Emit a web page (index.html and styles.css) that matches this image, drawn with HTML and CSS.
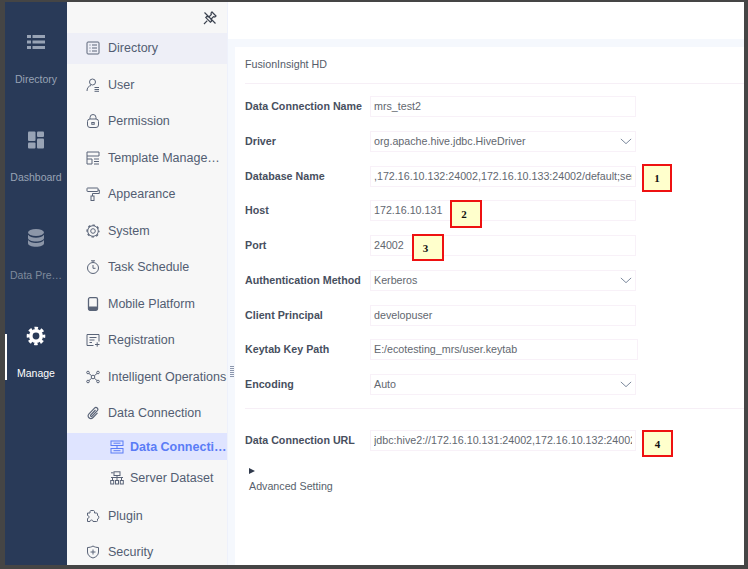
FILE: index.html
```html
<!DOCTYPE html>
<html lang="en">
<head>
<meta charset="utf-8">
<title>Data Connection</title>
<link rel="stylesheet" href="styles.css">
</head>
<body>
<div class="frame">
  <nav class="rail">
    <a class="rail-item">
      <svg class="rail-icon" viewBox="0 0 20 20"><g fill="currentColor"><rect x="1" y="3" width="4" height="3"/><rect x="6.5" y="3" width="12.5" height="3"/><rect x="1" y="8.5" width="4" height="3"/><rect x="6.5" y="8.5" width="12.5" height="3"/><rect x="1" y="14" width="4" height="3"/><rect x="6.5" y="14" width="12.5" height="3"/></g></svg>
      <span>Directory</span>
    </a>
    <a class="rail-item">
      <svg class="rail-icon" viewBox="0 0 20 20"><g fill="currentColor"><rect x="2" y="1.5" width="7.5" height="9.5" rx="1"/><rect x="11" y="1.5" width="7" height="5.5" rx="1"/><rect x="2" y="12.5" width="7.5" height="6" rx="1"/><rect x="11" y="8.5" width="7" height="10" rx="1"/></g></svg>
      <span>Dashboard</span>
    </a>
    <a class="rail-item">
      <svg class="rail-icon" viewBox="0 0 20 20"><g fill="currentColor"><ellipse cx="10" cy="4.5" rx="8" ry="3.5"/><path d="M2 6.8c1.3 2 4.5 3 8 3s6.700-1 8-3V10c0 2-3.600 3.500-8 3.500S2 12 2 10z"/><path d="M2 12c1.300 2 4.500 3 8 3s6.700-1 8-3v3.200c0 2-3.600 3.600-8 3.600S2 17.200 2 15.200z"/></g></svg>
      <span class="dim">Data Pre…</span>
    </a>
    <a class="rail-item active">
      <svg class="rail-icon" viewBox="0 0 20 20"><g fill="none" stroke="currentColor"><circle cx="10" cy="10" r="5.200" stroke-width="3.600"/><circle cx="10" cy="10" r="7.800" stroke-width="3" stroke-dasharray="3.400 2.727" stroke-dashoffset="1.700"/></g></svg>
      <span>Manage</span>
    </a>
  </nav>

  <aside class="menu">
    <div class="pin">
      <svg class="pin-icon" viewBox="0 0 14 14"><g fill="none" stroke="currentColor" stroke-width="1.200"><path d="M9 1 13 5l-1.200 1-1.300-.3-2.300 2.300.3 2.200-1.100 1L2.800 6.600l1-1.100 2.200.3 2.300-2.300L8 2.200z"/><path d="M1 13l3.300-3.300M1.500 1.500l11 11"/></g></svg>
    </div>
    <a class="menu-item current">
      <svg class="menu-icon" viewBox="0 0 14 14"><g fill="none" stroke="currentColor"><rect x="1" y="1" width="12" height="12" rx="1"/><path d="M3.500 4h1M6 4h5M3.500 7h1M6 7h5M3.500 10h1M6 10h5"/></g></svg>
      <span>Directory</span>
    </a>
    <a class="menu-item">
      <svg class="menu-icon" viewBox="0 0 14 14"><g fill="none" stroke="currentColor"><circle cx="6.500" cy="4" r="3"/><path d="M1 13c0-3 1.500-5 4-5.500M8.500 9.500H13M8.500 11.500H13M8.500 13.300H13"/></g></svg>
      <span>User</span>
    </a>
    <a class="menu-item">
      <svg class="menu-icon" viewBox="0 0 14 14"><g fill="none" stroke="currentColor"><rect x="1.500" y="5" width="11" height="8.500" rx="2.500"/><path d="M4 5V3.500a3 3 0 0 1 6 0V5"/><rect x="5.800" y="8.500" width="2.400" height="1.800"/></g></svg>
      <span>Permission</span>
    </a>
    <a class="menu-item">
      <svg class="menu-icon" viewBox="0 0 14 14"><g fill="none" stroke="currentColor"><path d="M1 1h12v4H1zM1 5v8h5V8H1M8 8h5M8 10.500h5M8 13h5"/></g></svg>
      <span>Template Manage…</span>
    </a>
    <a class="menu-item">
      <svg class="menu-icon" viewBox="0 0 14 14"><g fill="none" stroke="currentColor"><rect x="1" y="1" width="11" height="3.500" rx=".5"/><path d="M12 3h1.300v3.500H6.500v2.500"/><rect x="5" y="9" width="3" height="4.500"/></g></svg>
      <span>Appearance</span>
    </a>
    <a class="menu-item">
      <svg class="menu-icon" viewBox="0 0 14 14"><g fill="none" stroke="currentColor"><circle cx="7" cy="7" r="5.300"/><circle cx="7" cy="7" r="6" stroke-width="1.200" stroke-dasharray="2.500 2.212" stroke-dashoffset="1.250"/><circle cx="7" cy="7" r="2.300"/></g></svg>
      <span>System</span>
    </a>
    <a class="menu-item">
      <svg class="menu-icon" viewBox="0 0 14 14"><g fill="none" stroke="currentColor"><circle cx="7" cy="8" r="5.500"/><path d="M5 .8h4M7 .8v1.700M7 5v3.300h2.500"/></g></svg>
      <span>Task Schedule</span>
    </a>
    <a class="menu-item">
      <svg class="menu-icon" viewBox="0 0 14 14"><rect x="2.500" y=".7" width="9" height="12.600" rx="1.500" fill="none" stroke="currentColor" stroke-width="1.300"/><rect x="2.500" y="9.500" width="9" height="3.800" rx="1" fill="currentColor"/></svg>
      <span>Mobile Platform</span>
    </a>
    <a class="menu-item">
      <svg class="menu-icon" viewBox="0 0 14 14"><g fill="none" stroke="currentColor"><path d="M7.500 12.500H1v-11h12v7"/><path d="M3.500 4.500h7M3.500 7h5M3.500 9.500h2.500M9 11.500h4.500M11.200 9.300v4.400"/></g></svg>
      <span>Registration</span>
    </a>
    <a class="menu-item">
      <svg class="menu-icon" viewBox="0 0 14 14"><g fill="none" stroke="currentColor"><circle cx="2" cy="2.500" r="1.300"/><circle cx="12" cy="2.500" r="1.300"/><circle cx="2" cy="11.500" r="1.300"/><circle cx="12" cy="11.500" r="1.300"/><circle cx="7" cy="7" r="1.800"/><path d="M3 3.500l2.700 2.300M11 3.500 8.300 5.800M3 10.500l2.700-2.300M11 10.500 8.300 8.200"/></g></svg>
      <span>Intelligent Operations</span>
    </a>
    <a class="menu-item">
      <svg class="menu-icon" viewBox="0 0 14 14"><path d="M9.500 4 4.800 9c-.8.900.5 2 1.300 1.200l5.200-5.500c1.700-1.900-1-4.400-2.800-2.600L3 7.800c-2.700 2.900 1.300 6.500 4 3.700l4.500-4.700" fill="none" stroke="currentColor" stroke-width="1.200"/></svg>
      <span>Data Connection</span>
    </a>
    <a class="sub-item selected">
      <svg class="menu-icon" viewBox="0 0 14 14"><g fill="none" stroke="currentColor"><rect x="1" y="1" width="12" height="4.500"/><rect x="1" y="8.500" width="12" height="4.500"/><path d="M3.500 3.200h7M3.500 10.700h7M7 5.500v3"/></g></svg>
      <span>Data Connecti…</span>
    </a>
    <a class="sub-item">
      <svg class="menu-icon" viewBox="0 0 14 14"><g fill="none" stroke="currentColor"><rect x="4" y=".8" width="6" height="3.700"/><path d="M3.500 1.800H1M1 6.500h12M2.500 6.500v3M7 4.500v5M11.500 6.500v3"/><rect x=".7" y="9.500" width="3" height="3.500"/><rect x="5.500" y="9.500" width="3" height="3.500"/><rect x="10.300" y="9.500" width="3" height="3.500"/></g></svg>
      <span>Server Dataset</span>
    </a>
    <a class="menu-item after-sub">
      <svg class="menu-icon" viewBox="0 0 14 14"><path d="M5 1.500h2.500c.8 0 1 .6 1 1.500V4h2c.7 0 1 .4 1 1v1.500c1.800 0 1.800 3.500 0 3.500v1.500c0 .8-.4 1-1 1H7c0-2-3-2-3 0H1.500V9.500c2 0 2-3 0-3V4H4V3c0-.9.300-1.500 1-1.500z" fill="none" stroke="currentColor" stroke-linejoin="round"/></svg>
      <span>Plugin</span>
    </a>
    <a class="menu-item">
      <svg class="menu-icon" viewBox="0 0 14 14"><g fill="none" stroke="currentColor"><path d="M7 1c1.500 1 3.500 1.500 5.500 1.500v4.500c0 3-2.200 5-5.500 6-3.300-1-5.500-3-5.500-6V2.500C3.500 2.500 5.500 2 7 1z"/><path d="M4.500 7h5M7 4.500v5"/></g></svg>
      <span>Security</span>
    </a>
  </aside>

  <main class="main">
    <div class="topbar"></div>
    <div class="workspace">
      <i class="handle"></i>
      <section class="card">
        <h1 class="card-title">FusionInsight HD</h1>
        <form class="form">
          <div class="row"><label>Data Connection Name</label><input class="field" value="mrs_test2"></div>
          <div class="row"><label>Driver</label><div class="field select">org.apache.hive.jdbc.HiveDriver<svg class="chevron" viewBox="0 0 14 8"><path d="M1 1l6 5.500L13 1" fill="none" stroke="currentColor"/></svg></div></div>
          <div class="row"><label>Database Name</label><input class="field" value=",172.16.10.132:24002,172.16.10.133:24002/default;serviceDiscoveryMode"></div>
          <div class="row"><label>Host</label><input class="field" value="172.16.10.131"></div>
          <div class="row"><label>Port</label><input class="field" value="24002"></div>
          <div class="row"><label>Authentication Method</label><div class="field select">Kerberos<svg class="chevron" viewBox="0 0 14 8"><path d="M1 1l6 5.500L13 1" fill="none" stroke="currentColor"/></svg></div></div>
          <div class="row"><label>Client Principal</label><input class="field" value="developuser"></div>
          <div class="row"><label>Keytab Key Path</label><input class="field wide" value="E:/ecotesting_mrs/user.keytab"></div>
          <div class="row"><label>Encoding</label><div class="field select">Auto<svg class="chevron" viewBox="0 0 14 8"><path d="M1 1l6 5.500L13 1" fill="none" stroke="currentColor"/></svg></div></div>
        </form>
        <div class="url-block">
          <div class="row"><label>Data Connection URL</label><input class="field" value="jdbc:hive2://172.16.10.131:24002,172.16.10.132:24002,172.16.10.133"></div>
          <div class="advanced">
            <i class="caret"></i>
            <span>Advanced Setting</span>
          </div>
        </div>
      </section>
    </div>
  </main>

  <b class="note note-1">1</b>
  <b class="note note-2">2</b>
  <b class="note note-3">3</b>
  <b class="note note-4">4</b>
</div>
</body>
</html>
```

FILE: styles.css
```css
* { box-sizing: border-box; }

html, body {
  margin: 0;
  height: 100%;
  overflow: hidden;
}

body {
  background: #454545;
  font-family: "Liberation Sans", Arial, sans-serif;
}

.frame {
  position: relative;
  display: flex;
  width: 748px;
  height: 569px;
  padding: 2px 4px 4px 5px;
}

/* Left rail */
.rail {
  flex: 0 0 62px;
  padding-top: 10px;
  background: #293a58;
  color: #98a3b5;
  overflow: hidden;
}

.rail-item {
  position: relative;
  display: flex;
  flex-direction: column;
  align-items: center;
  height: 98px;
  padding-top: 20px;
  font-size: 10.5px;
  line-height: 12px;
}

.rail-icon {
  width: 20px;
  height: 20px;
  margin-bottom: 20.5px;
}

.rail-item .dim { color: #7f8a9c; }
.rail-item:nth-child(3) .rail-icon { color: #8c96a8; }

.rail-item.active { color: #fff; }

.rail-item.active::before {
  content: "";
  position: absolute;
  left: 0;
  top: 28px;
  width: 2px;
  height: 46px;
  background: #fff;
}

/* Second-level menu */
.menu {
  flex: 0 0 160px;
  background: #f7f7f7;
  color: #525d72;
  overflow: hidden;
  font-size: 12.5px;
}

.pin {
  display: flex;
  justify-content: flex-end;
  height: 30.8px;
  padding: 9px 10px 0 0;
}

.pin-icon {
  width: 14px;
  height: 14px;
  color: #3c4350;
}

.menu-item {
  display: flex;
  align-items: center;
  gap: 8px;
  height: 31px;
  margin-bottom: 5.5px;
  padding-left: 19px;
  white-space: nowrap;
}

.menu-item.current { background: #eeeff7; }
.menu-item.after-sub { margin-top: 9px; }

.menu-icon {
  flex: none;
  width: 14px;
  height: 14px;
  color: #5a6478;
}

.sub-item {
  display: flex;
  align-items: center;
  gap: 6px;
  height: 27px;
  margin-bottom: 4px;
  padding-left: 43px;
  white-space: nowrap;
}

.sub-item.selected {
  margin-top: -1px;
  background: #dfe4ff;
  color: #5a7cf6;
  font-weight: 700;
}

.sub-item.selected .menu-icon { color: #5a7cf6; }

/* Main area */
.main {
  flex: 1;
  display: flex;
  flex-direction: column;
  min-width: 0;
  background: #fff;
  border-left: 1px solid #eef1fb;
}

.topbar {
  flex: 0 0 37px;
  background: #fff;
}

.workspace {
  position: relative;
  flex: 1;
  padding: 8px 0 0 7px;
  background: #f5f8fd;
}

.handle {
  position: absolute;
  left: 2px;
  top: 327px;
  width: 4px;
  height: 11px;
  background: repeating-linear-gradient(to bottom, #8b96ad 0 1px, transparent 1px 2px);
  border-left: 1px solid transparent;
}

.card {
  height: 100%;
  padding-left: 10px;
  background: #fff;
  color: #585f6c;
  font-size: 10.7px;
}

.card-title {
  display: flex;
  align-items: center;
  height: 37px;
  margin: 0;
  padding-bottom: 2px;
  border-bottom: 1px solid #f6eff6;
  font-size: 10.7px;
  font-weight: 400;
  color: #555c69;
}

.form {
  display: flex;
  flex-direction: column;
  gap: 13.75px;
  padding: 12px 0 13px;
  border-bottom: 1px solid #f6eff6;
}

.row {
  display: flex;
  align-items: center;
  height: 21px;
}

.row label {
  flex: 0 0 125px;
  padding-bottom: 1px;
  font-weight: 700;
  font-size: 10.7px;
  color: #474f5e;
  white-space: nowrap;
}

.field {
  position: relative;
  display: flex;
  align-items: center;
  width: 266px;
  height: 21px;
  padding: 0 3px 1px;
  border: 1px solid #f8f1f8;
  background: #fff;
  color: #62676f;
  font: inherit;
  outline: none;
  white-space: nowrap;
}

.field.wide { width: 268px; }

.chevron {
  position: absolute;
  right: 3px;
  top: 6px;
  width: 12px;
  height: 7px;
  color: #66758c;
}

.url-block {
  padding-top: 21px;
}

.advanced {
  display: flex;
  flex-direction: column;
  align-items: flex-start;
  gap: 6px;
  padding: 17px 0 0 4px;
}

.caret {
  width: 0;
  height: 0;
  border-left: 6px solid #303a4c;
  border-top: 3.500px solid transparent;
  border-bottom: 3.500px solid transparent;
}

/* Callouts placed over the form */
.note {
  position: absolute;
  display: flex;
  align-items: center;
  justify-content: center;
  border: 2px solid #ee1111;
  background: #ffffcc;
  color: #111;
  font: 700 11px "Liberation Serif", serif;
}

.note-1 { left: 642px; top: 164px; width: 30px; height: 28px; }
.note-2 { left: 450px; top: 200px; width: 32px; height: 28px; padding-right: 4px; }
.note-3 { left: 412px; top: 234px; width: 32px; height: 27px; padding-right: 5px; }
.note-4 { left: 642px; top: 430px; width: 31px; height: 27px; }
```
